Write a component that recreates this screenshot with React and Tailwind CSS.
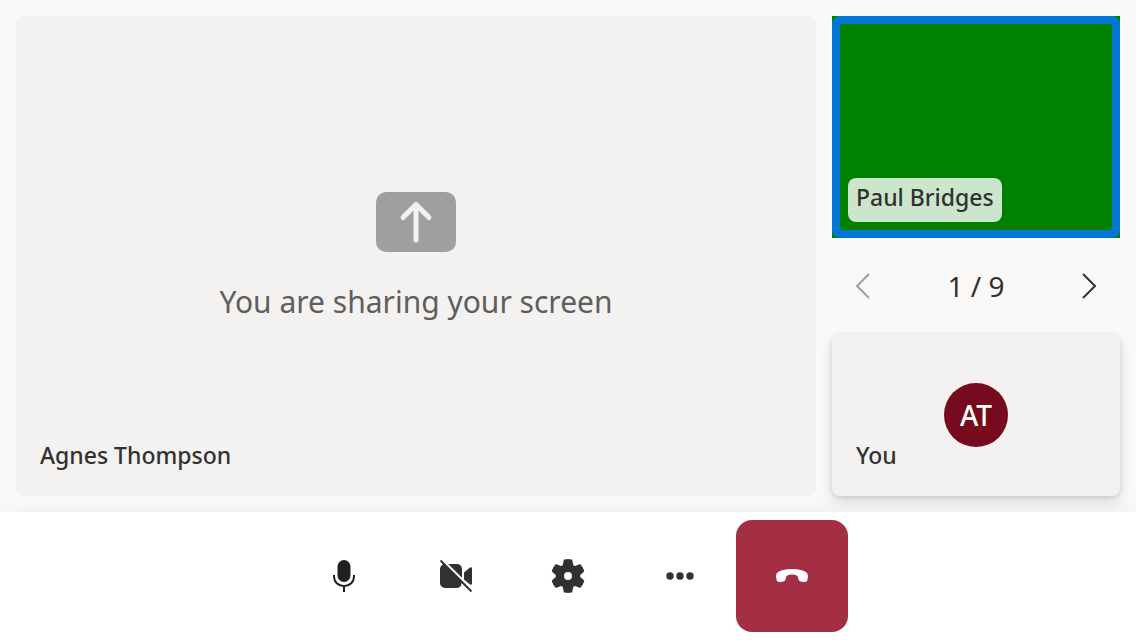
function MicIcon() {
  return (
    <svg viewBox="0 0 40 40" className="size-10 text-[#201f1e]" fill="none" stroke="currentColor" strokeWidth="2" strokeLinecap="butt" aria-hidden="true">
      <rect x="13.500" y="4" width="13" height="22" rx="6.500" fill="currentColor" stroke="none" />
      <path d="M10 19v1.500A9.500 9.500 0 0 0 19.500 30h1A9.500 9.500 0 0 0 30 20.500V19M20 30v6" />
    </svg>
  );
}

function VideoOffIcon() {
  return (
    <svg viewBox="0 0 40 40" className="size-10" fill="currentColor" aria-hidden="true">
      <path d="M4.300 5.700a1 1 0 0 1 1.400-1.400l30 30a1 1 0 0 1-1.400 1.400L25.500 26.900A5 5 0 0 1 21 32H9a5 5 0 0 1-5-5V13a5 5 0 0 1 2.400-4.300L7 8.400Z" />
      <path d="M12.200 8H21a5 5 0 0 1 5 5v8.800Z" />
      <path d="M28 16.400 34 11.500a1.200 1.200 0 0 1 2 .9v15.200a1.200 1.200 0 0 1-2 .9l-6-4.900Z" />
    </svg>
  );
}

function SettingsIcon() {
  return (
    <svg viewBox="0 0 20 20" className="size-10" fill="currentColor" aria-hidden="true">
      <path d="M1.91 7.38A8.5 8.5 0 0 1 3.7 4.3a.5.5 0 0 1 .54-.13l1.92.68a1 1 0 0 0 1.32-.76l.36-2a.5.5 0 0 1 .4-.4 8.53 8.53 0 0 1 3.55 0c.2.04.35.2.38.4l.37 2a1 1 0 0 0 1.32.76l1.92-.68a.5.5 0 0 1 .54.13 8.5 8.5 0 0 1 1.78 3.08c.06.2 0 .4-.15.54l-1.56 1.32a1 1 0 0 0 0 1.52l1.56 1.32a.5.5 0 0 1 .15.54 8.5 8.5 0 0 1-1.78 3.08.5.5 0 0 1-.54.13l-1.92-.68a1 1 0 0 0-1.32.76l-.37 2a.5.5 0 0 1-.38.4 8.53 8.53 0 0 1-3.56 0 .5.5 0 0 1-.39-.4l-.36-2a1 1 0 0 0-1.32-.76l-1.92.68a.5.5 0 0 1-.54-.13 8.5 8.5 0 0 1-1.78-3.08.5.5 0 0 1 .15-.54l1.56-1.32a1 1 0 0 0 0-1.52L2.06 7.92a.5.5 0 0 1-.15-.54ZM8 10a2 2 0 1 0 4 0 2 2 0 0 0-4 0Z" />
    </svg>
  );
}

function MoreIcon() {
  return (
    <svg viewBox="0 0 40 40" className="size-10" fill="currentColor" aria-hidden="true">
      <circle cx="10" cy="20" r="3.700" />
      <circle cx="20" cy="20" r="3.700" />
      <circle cx="30" cy="20" r="3.700" />
    </svg>
  );
}

function HangUpIcon() {
  return (
    <svg viewBox="0 0 40 40" className="size-10" fill="currentColor" aria-hidden="true">
      <path d="M35.900 21 35.500 23.300A3.100 3.100 0 0 1 32 26L28.800 25.600A3 3 0 0 1 26.500 23.500L25.500 20Q23 18.600 20 18.600T14.500 20L13.500 23.500A3 3 0 0 1 11.200 25.600L8 26A3.100 3.100 0 0 1 4.500 23.300L4.100 21C3.800 18.500 4.700 17 6.600 15.800Q11.500 13 20 13T33.400 15.800C35.300 17 36.200 18.500 35.900 21Z" />
    </svg>
  );
}

function ShareIcon() {
  return (
    <svg viewBox="0 0 80 60" className="h-15 w-20" fill="none" aria-hidden="true">
      <rect width="80" height="60" rx="10" fill="#a19f9d" />
      <path d="M40 13v35M27 25.500l13-13 13 13" stroke="#f3f2f1" strokeWidth="5" strokeLinecap="round" strokeLinejoin="round" />
    </svg>
  );
}

function Chevron({ d }) {
  return (
    <svg viewBox="0 0 32 32" className="size-8" fill="none" stroke="currentColor" strokeWidth="2" aria-hidden="true">
      <path d={d} />
    </svg>
  );
}

function NameLabel({ children, highlighted }) {
  return (
    <span
      className={
        highlighted
          ? "absolute bottom-4 left-4 rounded-lg bg-white/80 px-2 pt-[3px] pb-[9px] text-[23px] leading-8 font-medium"
          : "absolute bottom-4 left-4 px-2 pt-[3px] pb-[9px] text-[23px] leading-8 font-medium"
      }
    >
      {children}
    </span>
  );
}

function ControlButton({ label, danger, children }) {
  return (
    <button
      type="button"
      aria-label={label}
      className={
        danger
          ? "flex size-28 items-center justify-center rounded-2xl bg-[#a42e43] text-white"
          : "flex size-28 items-center justify-center rounded-2xl text-[#323130]"
      }
    >
      {children}
    </button>
  );
}

export default function App() {
  return (
    <div className="flex min-h-screen flex-col overflow-hidden bg-[#faf9f8] font-['Noto_Sans','Open_Sans',sans-serif] text-[#323130]">
      <main className="flex flex-1 gap-4 p-4">
        <section className="relative flex flex-1 flex-col items-center justify-center gap-8 rounded-lg bg-[#f3f2f1]">
          <ShareIcon />
          <p className="text-3xl leading-9 text-[#605e5c]">You are sharing your screen</p>
          <NameLabel>Agnes Thompson</NameLabel>
        </section>

        <aside className="flex w-72 flex-col">
          <div className="relative flex-1 bg-[#008000]">
            <div className="absolute inset-0 rounded-lg border-8 border-[#0078d4]" />
            <NameLabel highlighted>Paul Bridges</NameLabel>
          </div>
          <nav aria-label="Participants pages" className="flex h-24 items-center justify-between px-4">
            <button type="button" aria-label="Previous page" disabled className="text-[#a19f9d]">
              <Chevron d="M21 4 9 16l12 12" />
            </button>
            <span className="text-[28px]">1 / 9</span>
            <button type="button" aria-label="Next page">
              <Chevron d="m11 4 12 12-12 12" />
            </button>
          </nav>
          <div className="relative flex h-[162px] items-center justify-center rounded-lg bg-[#f3f2f1] shadow-[0_6px_14px_rgba(0,0,0,0.13),0_1px_4px_rgba(0,0,0,0.11)]">
            <div className="flex size-16 items-center justify-center rounded-full bg-[#750b1c] text-[28px] font-medium text-white">AT</div>
            <NameLabel>You</NameLabel>
          </div>
        </aside>
      </main>

      <footer className="relative flex justify-center bg-white p-2 shadow-[0_13px_29px_rgba(0,0,0,0.13)]">
        <ControlButton label="Mute microphone"><MicIcon /></ControlButton>
        <ControlButton label="Turn on camera"><VideoOffIcon /></ControlButton>
        <ControlButton label="Settings"><SettingsIcon /></ControlButton>
        <ControlButton label="More options"><MoreIcon /></ControlButton>
        <ControlButton label="Leave call" danger><HangUpIcon /></ControlButton>
      </footer>
    </div>
  );
}
